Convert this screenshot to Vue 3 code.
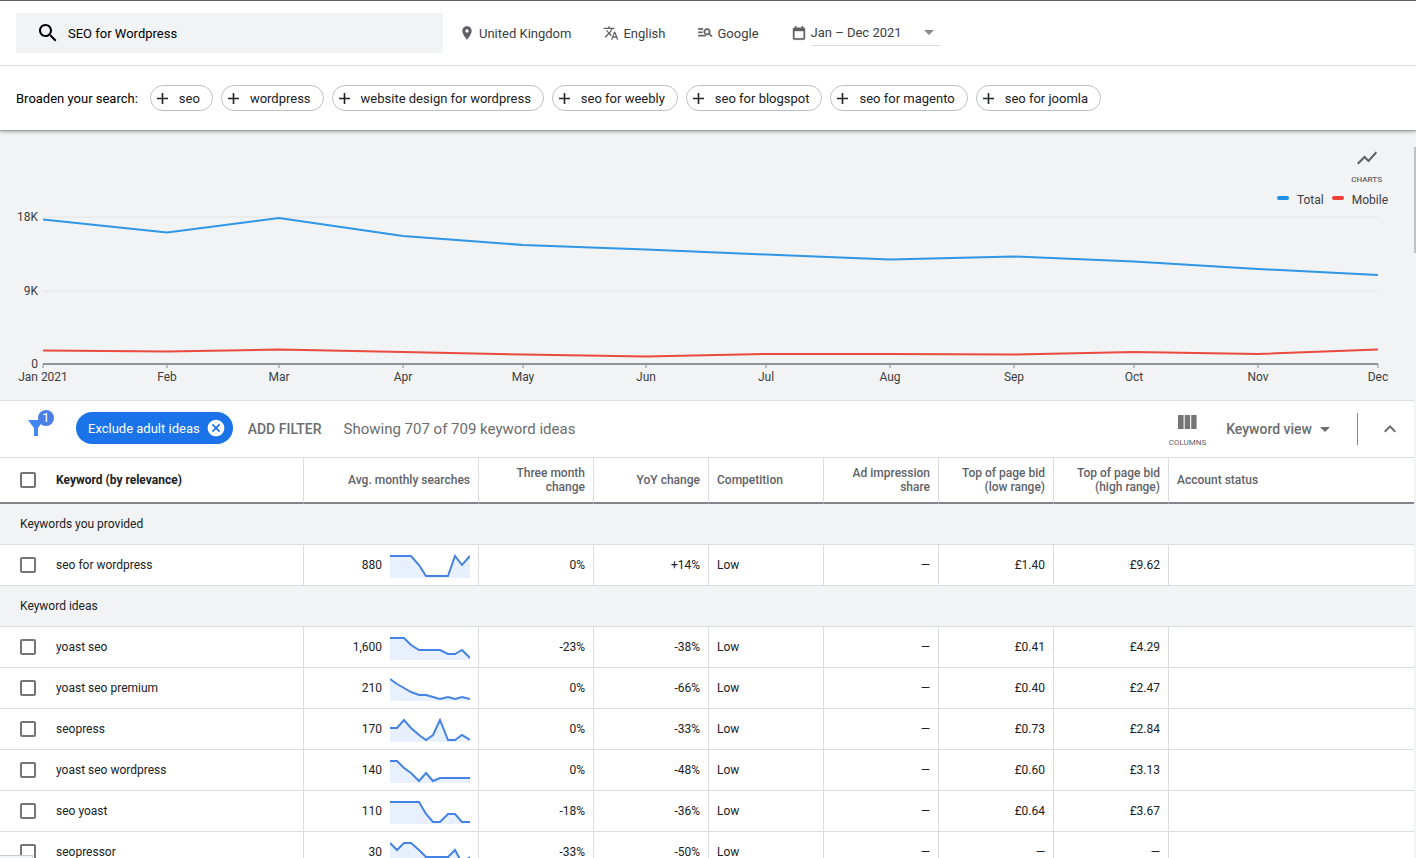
<script setup>
import { ref } from 'vue'

const query = ref('SEO for Wordpress')

const broaden = [
  'seo',
  'wordpress',
  'website design for wordpress',
  'seo for weebly',
  'seo for blogspot',
  'seo for magento',
  'seo for joomla',
]

const months = [
  { label: 'Jan 2021', x: 43, total: 10.5, mobile: 141.5 },
  { label: 'Feb', x: 167, total: 23.5, mobile: 142.5 },
  { label: 'Mar', x: 279, total: 9, mobile: 140.5 },
  { label: 'Apr', x: 403, total: 27, mobile: 143 },
  { label: 'May', x: 523, total: 36, mobile: 145.5 },
  { label: 'Jun', x: 646, total: 40.5, mobile: 147.5 },
  { label: 'Jul', x: 766, total: 45.5, mobile: 145 },
  { label: 'Aug', x: 890, total: 50.5, mobile: 145 },
  { label: 'Sep', x: 1014, total: 47.5, mobile: 145.5 },
  { label: 'Oct', x: 1134, total: 52.5, mobile: 143 },
  { label: 'Nov', x: 1258, total: 60, mobile: 145 },
  { label: 'Dec', x: 1378, total: 66, mobile: 140.5 },
]
const series = (key) => months.map((m) => `${m.x},${m[key]}`).join(' ')

const columns = [
  { label: 'Avg. monthly searches', align: 'right' },
  { label: 'Three month change', align: 'right' },
  { label: 'YoY change', align: 'right' },
  { label: 'Competition', align: 'left' },
  { label: 'Ad impression share', align: 'right' },
  { label: 'Top of page bid (low range)', align: 'right' },
  { label: 'Top of page bid (high range)', align: 'right' },
  { label: 'Account status', align: 'left' },
]

const groups = [
  {
    title: 'Keywords you provided',
    rows: [
      { keyword: 'seo for wordpress', searches: '880', trend: [2, 2, 2, 2, 11, 22, 22, 22, 22, 2, 11, 2], three: '0%', yoy: '+14%', low: '£1.40', high: '£9.62' },
    ],
  },
  {
    title: 'Keyword ideas',
    rows: [
      { keyword: 'yoast seo', searches: '1,600', trend: [2, 2, 2, 9, 14, 14, 14, 14, 18, 18, 14, 22], three: '-23%', yoy: '-38%', low: '£0.41', high: '£4.29' },
      { keyword: 'yoast seo premium', searches: '210', trend: [2, 7, 11, 15, 18, 18, 20, 22, 20, 22, 20, 22], three: '0%', yoy: '-66%', low: '£0.40', high: '£2.47' },
      { keyword: 'seopress', searches: '170', trend: [10, 10, 2, 10, 17, 22, 17, 2, 22, 22, 17, 22], three: '0%', yoy: '-33%', low: '£0.73', high: '£2.84' },
      { keyword: 'yoast seo wordpress', searches: '140', trend: [2, 2, 9, 14, 22, 14, 22, 19, 19, 19, 19, 19], three: '0%', yoy: '-48%', low: '£0.60', high: '£3.13' },
      { keyword: 'seo yoast', searches: '110', trend: [2, 2, 2, 2, 2, 14, 22, 22, 14, 14, 22, 22], three: '-18%', yoy: '-36%', low: '£0.64', high: '£3.67' },
      { keyword: 'seopressor', searches: '30', trend: [2, 9, 2, 2, 9, 16, 16, 16, 16, 9, 22, 16], three: '-33%', yoy: '-50%', low: '—', high: '—' },
    ],
  },
]
const spark = (trend) => trend.map((y, i) => `${Math.floor((i * 80) / 11)},${y}`).join(' ')
</script>

<template>
  <div class="app">
    <header class="header">
      <div class="search-row">
        <label class="search">
          <svg class="i24" viewBox="0 0 24 24" aria-hidden="true"><path d="M15.5 14h-.79l-.28-.27C15.41 12.59 16 11.11 16 9.5 16 5.91 13.09 3 9.5 3S3 5.91 3 9.5 5.91 16 9.5 16c1.61 0 3.09-.59 4.23-1.57l.27.28v.79l5 4.99L20.49 19l-4.99-5zm-6 0C7.01 14 5 11.99 5 9.5S7.01 5 9.5 5 14 7.01 14 9.5 11.99 14 9.5 14z" /></svg>
          <input v-model="query" type="text" aria-label="Search keywords" />
        </label>
        <div class="settings">
          <button type="button" class="setting">
            <svg class="i16" viewBox="0 0 24 24" aria-hidden="true"><path d="M12 2C8.13 2 5 5.13 5 9c0 5.25 7 13 7 13s7-7.75 7-13c0-3.87-3.13-7-7-7zm0 9.5a2.5 2.5 0 0 1 0-5 2.5 2.5 0 0 1 0 5z" /></svg>
            <span>United Kingdom</span>
          </button>
          <button type="button" class="setting">
            <svg class="i16" viewBox="0 0 24 24" aria-hidden="true"><path d="M12.87 15.07l-2.54-2.51.03-.03c1.74-1.94 2.98-4.17 3.71-6.53H17V4h-7V2H8v2H1v1.99h11.17C11.5 7.92 10.44 9.75 9 11.35 8.07 10.32 7.3 9.19 6.69 8h-2c.73 1.63 1.73 3.17 2.98 4.56l-5.09 5.02L4 19l5-5 3.11 3.11.76-2.04zM18.5 10h-2L12 22h2l1.12-3h4.75L21 22h2l-4.5-12zm-2.62 7l1.62-4.33L19.12 17h-3.24z" /></svg>
            <span>English</span>
          </button>
          <button type="button" class="setting">
            <svg class="i16 bold" viewBox="0 0 24 24" aria-hidden="true"><path d="M9 7H2V5h7v2zm-1 3H2v2h6v-2zm13.600 8l-3.800-3.800A5 5 0 1 1 20 10c0 1-.3 2-.8 2.800l3.800 3.800zM18 10a3 3 0 1 0-6 0 3 3 0 0 0 6 0zM2 17h11v-2H2v2z" /></svg>
            <span>Google</span>
          </button>
          <button type="button" class="setting">
            <svg class="i16 bold" viewBox="0 0 24 24" aria-hidden="true"><path d="M19 4h-1V2h-2v2H8V2H6v2H5c-1.110 0-1.990.9-1.990 2L3 20c0 1.100.890 2 2 2h14c1.100 0 2-.9 2-2V6c0-1.100-.9-2-2-2zm0 16H5V9h14v11z" /></svg>
            <span class="date-value">Jan – Dec 2021
              <svg class="caret" viewBox="0 0 10 5" aria-hidden="true"><path d="M0 0h10L5 5z" /></svg>
            </span>
          </button>
        </div>
      </div>
      <div class="broaden-row">
        <span class="broaden-label">Broaden your search:</span>
        <button v-for="term in broaden" :key="term" type="button" class="suggestion">
          <svg class="plus" viewBox="0 0 11 11" aria-hidden="true"><path d="M5.500 0v11M0 5.500h11" /></svg>
          <span>{{ term }}</span>
        </button>
      </div>
    </header>

    <div class="body">
      <main class="content">
        <section class="chart">
          <div class="chart-tools">
            <button type="button" class="stacked">
              <svg class="i24" viewBox="0 0 24 24" aria-hidden="true"><path d="M3.500 18.490l6-6.010 4 4L22 6.920l-1.410-1.410-7.090 7.970-4-4L2 16.990z" /></svg>
              <span>CHARTS</span>
            </button>
          </div>
          <div class="legend">
            <span class="key total"></span><span>Total</span>
            <span class="key mobile"></span><span>Mobile</span>
          </div>
          <svg class="plot" viewBox="0 0 1414 191" role="img" aria-label="Monthly search volume">
            <path class="grid" d="M43 8H1378M43 82H1378" />
            <path class="axis" d="M43 155H1378" />
            <path v-for="m in months" :key="m.label" class="tick" :d="`M${m.x} 155v4`" />
            <polyline class="line total-line" :points="series('total')" />
            <polyline class="line mobile-line" :points="series('mobile')" />
            <g text-anchor="end">
              <text x="38" y="12">18K</text>
              <text x="38" y="86">9K</text>
              <text x="38" y="159">0</text>
            </g>
            <g text-anchor="middle">
              <text v-for="m in months" :key="m.label" :x="m.x" y="172">{{ m.label }}</text>
            </g>
          </svg>
        </section>

        <section class="toolbar">
          <button type="button" class="funnel" aria-label="Filters">
            <svg viewBox="0 0 16 16" aria-hidden="true"><path d="M0 0h16L10 8v8H6V8z" /></svg>
            <span class="badge">1</span>
          </button>
          <div class="chip">
            <span>Exclude adult ideas</span>
            <button type="button" aria-label="Remove filter">
              <svg viewBox="0 0 24 24" aria-hidden="true"><path d="M12 2C6.470 2 2 6.470 2 12s4.470 10 10 10 10-4.470 10-10S17.530 2 12 2zm5 13.590L15.590 17 12 13.410 8.410 17 7 15.590 10.590 12 7 8.410 8.410 7 12 10.590 15.590 7 17 8.410 13.410 12 17 15.590z" /></svg>
            </button>
          </div>
          <button type="button" class="add-filter">ADD FILTER</button>
          <span class="showing">Showing 707 of 709 keyword ideas</span>
          <div class="toolbar-end">
            <button type="button" class="stacked columns-button">
              <svg viewBox="0 0 19 14" aria-hidden="true"><path d="M0 0h5.600v14H0zM6.700 0h5.400v14H6.700zM13.200 0h5.400v14h-5.400z" /></svg>
              <span>COLUMNS</span>
            </button>
            <button type="button" class="view">
              <span>Keyword view</span>
              <svg class="caret" viewBox="0 0 10 5" aria-hidden="true"><path d="M0 0h10L5 5z" /></svg>
            </button>
            <span class="divider"></span>
            <button type="button" class="collapse" aria-label="Collapse">
              <svg class="i24" viewBox="0 0 24 24" aria-hidden="true"><path d="M12 8l-6 6 1.410 1.410L12 10.830l4.590 4.580L18 14z" /></svg>
            </button>
          </div>
        </section>

        <table class="keywords">
          <colgroup>
            <col class="c-keyword" />
            <col class="c-searches" />
            <col v-for="n in 6" :key="n" class="c-metric" />
            <col />
          </colgroup>
          <thead>
            <tr>
              <th scope="col" class="left first">
                <label class="pick"><input type="checkbox" /><span>Keyword (by relevance)</span></label>
              </th>
              <th v-for="c in columns" :key="c.label" scope="col" :class="c.align">{{ c.label }}</th>
            </tr>
          </thead>
          <tbody v-for="g in groups" :key="g.title">
            <tr class="group"><th colspan="9" scope="colgroup">{{ g.title }}</th></tr>
            <tr v-for="r in g.rows" :key="r.keyword">
              <td class="first">
                <label class="pick"><input type="checkbox" /><span>{{ r.keyword }}</span></label>
              </td>
              <td>
                <div class="volume">
                  <span>{{ r.searches }}</span>
                  <svg class="spark" viewBox="0 0 80 24" aria-hidden="true">
                    <polygon :points="`0,24 ${spark(r.trend)} 80,24`" />
                    <polyline :points="spark(r.trend)" />
                  </svg>
                </div>
              </td>
              <td class="right">{{ r.three }}</td>
              <td class="right">{{ r.yoy }}</td>
              <td>Low</td>
              <td class="right">—</td>
              <td class="right">{{ r.low }}</td>
              <td class="right">{{ r.high }}</td>
              <td></td>
            </tr>
          </tbody>
        </table>
      </main>
      <div class="scroll-track"><div class="scroll-thumb"></div></div>
    </div>
    <div class="status-bubble"></div>
  </div>
</template>

<style>
body {
  margin: 0;
  overflow: hidden;
}
</style>

<style scoped>
.app {
  display: flex;
  flex-direction: column;
  height: 100vh;
  overflow: hidden;
  box-sizing: border-box;
  border-top: 1px solid #5f6063;
  background: #fff;
  color: #202124;
  font-family: Roboto, "Liberation Sans", sans-serif;
  font-size: 13px;
}
button {
  margin: 0;
  padding: 0;
  border: 0;
  background: none;
  color: inherit;
  font: inherit;
  cursor: pointer;
}
svg {
  display: block;
  flex: none;
  fill: currentColor;
}
.i24 { width: 24px; height: 24px; }
.i16 { width: 16px; height: 16px; }
.bold {
  stroke: currentColor;
  stroke-width: 0.6;
}
.caret { width: 10px; height: 5px; }

.header {
  position: relative;
  flex: none;
  border-bottom: 1px solid #a3a6a9;
  box-shadow: 0 1px 3px rgba(0, 0, 0, 0.3);
}
.search-row {
  display: flex;
  align-items: center;
  gap: 16px;
  height: 64px;
  padding: 0 16px;
  border-bottom: 1px solid #dadce0;
}
.search {
  display: flex;
  align-items: center;
  gap: 8px;
  flex: 0 1 427px;
  box-sizing: border-box;
  height: 40px;
  padding: 0 20px;
  background: #f1f3f4;
  color: #000;
}
.search input {
  flex: 1;
  min-width: 0;
  padding: 0;
  border: 0;
  outline: 0;
  background: none;
  color: #000;
  font: inherit;
}
.settings {
  display: flex;
  align-items: center;
  gap: 32px;
  color: #5f6063;
}
.setting {
  display: flex;
  align-items: center;
  gap: 4px;
  white-space: nowrap;
}
.setting span { color: #3c4043; }
.setting .date-value {
  display: flex;
  align-items: center;
  justify-content: space-between;
  box-sizing: border-box;
  width: 130px;
  height: 25px;
  padding-right: 7px;
  border-bottom: 1px solid #dadce0;
}
.setting .caret { color: #8a8a8a; }

.broaden-row {
  display: flex;
  align-items: center;
  gap: 8px;
  height: 64px;
  padding: 0 16px;
  white-space: nowrap;
}
.broaden-label {
  margin-right: 4px;
  color: #000;
}
.suggestion {
  display: flex;
  align-items: center;
  gap: 11px;
  box-sizing: border-box;
  height: 26px;
  padding: 0 12px 0 6px;
  border: 1px solid #bdc1c6;
  border-radius: 13px;
}
.plus {
  width: 11px;
  height: 11px;
  stroke: currentColor;
  stroke-width: 1.6;
}

.body {
  display: flex;
  flex: 1;
  min-height: 0;
}
.content {
  flex: 1;
  min-width: 0;
  overflow: hidden;
}
.scroll-track {
  width: 2px;
  padding-top: 16px;
  background: #f1f3f4;
}
.scroll-thumb {
  height: 106px;
  background: #c1c1c1;
}

.chart {
  border-bottom: 1px solid #dadce0;
  background: #f1f3f4;
}
.chart-tools {
  display: flex;
  justify-content: flex-end;
  padding: 15px 32px 0 0;
}
.stacked {
  display: flex;
  flex-direction: column;
  align-items: center;
  color: #5f6063;
  font-size: 8px;
  font-weight: 500;
  line-height: 12px;
}
.chart-tools .stacked { gap: 4px; }
.legend {
  display: flex;
  align-items: center;
  justify-content: flex-end;
  gap: 8px;
  box-sizing: border-box;
  height: 23px;
  padding: 4px 26px 0 0;
  color: #3c4043;
  font-size: 12px;
}
.key {
  width: 12px;
  height: 4px;
  margin-bottom: 4px;
  border-radius: 2px;
}
.total { background: #1e8fe8; }
.mobile { background: #ee4035; }
.plot {
  width: 100%;
  height: auto;
}
.plot text {
  fill: #3c4043;
  font-size: 12px;
}
.grid { stroke: #e3e4e6; fill: none; }
.axis { stroke: #8f9296; stroke-width: 2; }
.tick { stroke: #8f9296; }
.line { fill: none; stroke-width: 2; }
.total-line { stroke: #2f96e8; }
.mobile-line { stroke: #ea4a40; }

.toolbar {
  display: flex;
  align-items: center;
  height: 56px;
  padding: 0 12px 0 28px;
  border-bottom: 1px solid #dadce0;
  color: #6b6c6e;
  white-space: nowrap;
}
.funnel {
  position: relative;
  margin: 0 32px 2px 0;
  color: #4285f4;
}
.funnel svg { width: 16px; height: 16px; }
.badge {
  position: absolute;
  top: -10px;
  left: 10px;
  width: 16px;
  height: 16px;
  border-radius: 8px;
  background: #4a7fe8;
  color: #fff;
  font-size: 13px;
  line-height: 16px;
}
.chip {
  display: flex;
  align-items: center;
  gap: 6px;
  height: 32px;
  margin: 0 15px 2px 0;
  padding: 0 7px 0 12px;
  border-radius: 16px;
  background: #1a73e8;
  color: #fff;
}
.chip svg { width: 20px; height: 20px; }
.add-filter {
  margin-right: 22px;
  font-size: 14px;
  font-weight: 500;
}
.showing { font-size: 15px; }
.toolbar-end {
  display: flex;
  align-items: center;
  margin-left: auto;
}
.columns-button {
  gap: 8px;
  margin: 6px 20px 0 0;
  font-weight: 400;
}
.columns-button svg {
  width: 19px;
  height: 14px;
  color: #757575;
}
.view {
  display: flex;
  align-items: center;
  gap: 8px;
  margin-right: 27px;
  font-size: 14px;
  font-weight: 500;
}
.divider {
  width: 1px;
  height: 32px;
  margin-right: 20px;
  background: #80868b;
}

.keywords {
  width: 100%;
  table-layout: fixed;
  border-collapse: separate;
  border-spacing: 0;
  font-size: 12px;
  line-height: 14px;
}
.c-keyword { width: 304px; }
.c-searches { width: 175px; }
.c-metric { width: 115px; }
.keywords th,
.keywords td {
  box-sizing: border-box;
  height: 41px;
  padding: 0 8px;
  border-right: 1px solid #dadce0;
  border-bottom: 1px solid #dadce0;
  text-align: left;
  vertical-align: middle;
}
.keywords th:last-child,
.keywords td:last-child { border-right: 0; }
.keywords thead th {
  height: 46px;
  border-bottom: 2px solid #80868b;
  color: #5f6368;
  font-weight: 500;
}
.keywords thead .first {
  color: #202124;
  font-weight: 700;
}
.keywords .right { text-align: right; }
.keywords .first { padding-left: 20px; }
.keywords .group th {
  padding-left: 20px;
  background: #f1f3f4;
  font-weight: 400;
}
.pick {
  display: flex;
  align-items: center;
  gap: 20px;
}
.pick input {
  appearance: none;
  box-sizing: border-box;
  width: 16px;
  height: 16px;
  margin: 0;
  border: 2px solid #757575;
  border-radius: 2px;
  background: #fff;
}
.volume {
  display: flex;
  align-items: center;
  justify-content: flex-end;
  gap: 8px;
}
.spark {
  width: 80px;
  height: 24px;
  margin-top: 2px;
}
.spark polygon { fill: #e8f0fe; }
.spark polyline {
  fill: none;
  stroke: #4483e4;
  stroke-width: 2;
}
.status-bubble {
  position: fixed;
  bottom: 0;
  left: 0;
  box-sizing: border-box;
  width: 33px;
  height: 3px;
  border-top: 1px solid #c8ccd0;
  border-right: 1px solid #c8ccd0;
  background: #f1f3f4;
}
</style>
